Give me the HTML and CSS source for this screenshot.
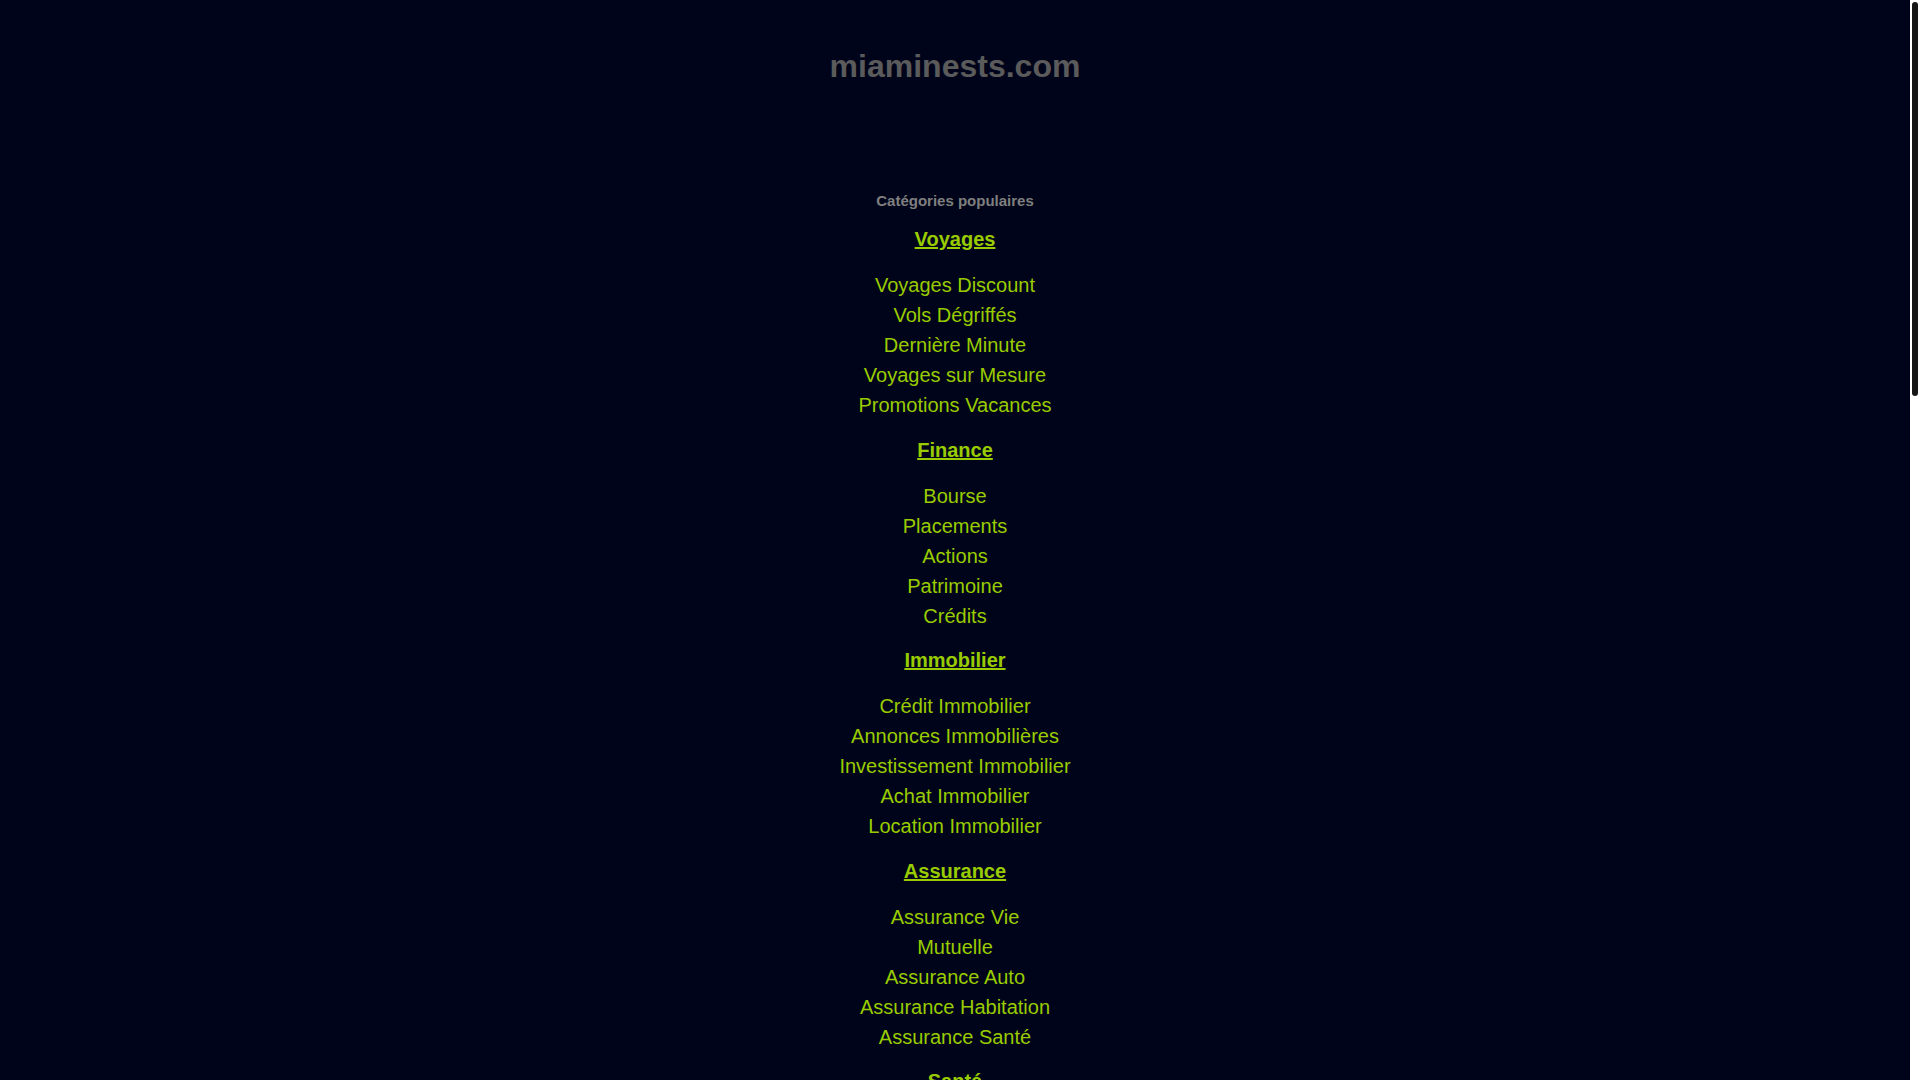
FILE: index.html
```html
<!DOCTYPE html>
<html lang="fr">
<head>
<meta charset="utf-8">
<title>miaminests.com</title>
<link rel="stylesheet" href="styles.css">
</head>
<body>
<div class="page">
  <h1 class="site-title">miaminests.com</h1>
  <div class="cats">
    <div class="cats-label">Catégories populaires</div>
    <section class="cat">
      <a class="cat-head" href="#">Voyages</a>
      <ul class="cat-list">
        <li><a href="#">Voyages Discount</a></li>
        <li><a href="#">Vols Dégriffés</a></li>
        <li><a href="#">Dernière Minute</a></li>
        <li><a href="#">Voyages sur Mesure</a></li>
        <li><a href="#">Promotions Vacances</a></li>
      </ul>
    </section>
    <section class="cat">
      <a class="cat-head" href="#">Finance</a>
      <ul class="cat-list">
        <li><a href="#">Bourse</a></li>
        <li><a href="#">Placements</a></li>
        <li><a href="#">Actions</a></li>
        <li><a href="#">Patrimoine</a></li>
        <li><a href="#">Crédits</a></li>
      </ul>
    </section>
    <section class="cat">
      <a class="cat-head" href="#">Immobilier</a>
      <ul class="cat-list">
        <li><a href="#">Crédit Immobilier</a></li>
        <li><a href="#">Annonces Immobilières</a></li>
        <li><a href="#">Investissement Immobilier</a></li>
        <li><a href="#">Achat Immobilier</a></li>
        <li><a href="#">Location Immobilier</a></li>
      </ul>
    </section>
    <section class="cat">
      <a class="cat-head" href="#">Assurance</a>
      <ul class="cat-list">
        <li><a href="#">Assurance Vie</a></li>
        <li><a href="#">Mutuelle</a></li>
        <li><a href="#">Assurance Auto</a></li>
        <li><a href="#">Assurance Habitation</a></li>
        <li><a href="#">Assurance Santé</a></li>
      </ul>
    </section>
    <section class="cat">
      <a class="cat-head" href="#">Santé</a>
      <ul class="cat-list">
        <li><a href="#">Médecine Douce</a></li>
        <li><a href="#">Nutrition</a></li>
        <li><a href="#">Bien-être</a></li>
        <li><a href="#">Remise en Forme</a></li>
        <li><a href="#">Régime</a></li>
      </ul>
    </section>
    <section class="cat">
      <a class="cat-head" href="#">Auto</a>
      <ul class="cat-list">
        <li><a href="#">Voitures Neuves</a></li>
        <li><a href="#">Voitures d'Occasion</a></li>
        <li><a href="#">Location Voiture</a></li>
        <li><a href="#">Pièces Auto</a></li>
        <li><a href="#">Crédit Auto</a></li>
      </ul>
    </section>
    <section class="cat">
      <a class="cat-head" href="#">Emploi</a>
      <ul class="cat-list">
        <li><a href="#">Offres d'Emploi</a></li>
        <li><a href="#">Intérim</a></li>
        <li><a href="#">CV en Ligne</a></li>
        <li><a href="#">Recrutement</a></li>
        <li><a href="#">Carrière</a></li>
      </ul>
    </section>
    <section class="cat">
      <a class="cat-head" href="#">Formation</a>
      <ul class="cat-list">
        <li><a href="#">Cours de Langues</a></li>
        <li><a href="#">Formation Continue</a></li>
        <li><a href="#">Écoles</a></li>
        <li><a href="#">Universités</a></li>
        <li><a href="#">Soutien Scolaire</a></li>
      </ul>
    </section>
    <section class="cat">
      <a class="cat-head" href="#">Maison</a>
      <ul class="cat-list">
        <li><a href="#">Décoration</a></li>
        <li><a href="#">Jardinage</a></li>
        <li><a href="#">Bricolage</a></li>
        <li><a href="#">Meubles</a></li>
        <li><a href="#">Électroménager</a></li>
      </ul>
    </section>
    <section class="cat">
      <a class="cat-head" href="#">Shopping</a>
      <ul class="cat-list">
        <li><a href="#">Mode</a></li>
        <li><a href="#">Bijoux</a></li>
        <li><a href="#">Cadeaux</a></li>
        <li><a href="#">Cosmétiques</a></li>
        <li><a href="#">Soldes</a></li>
      </ul>
    </section>
    <section class="cat">
      <a class="cat-head" href="#">Technologie</a>
      <ul class="cat-list">
        <li><a href="#">Ordinateurs</a></li>
        <li><a href="#">Téléphones Mobiles</a></li>
        <li><a href="#">Internet</a></li>
        <li><a href="#">Logiciels</a></li>
        <li><a href="#">Jeux Vidéo</a></li>
      </ul>
    </section>
    <section class="cat">
      <a class="cat-head" href="#">Loisirs</a>
      <ul class="cat-list">
        <li><a href="#">Sports</a></li>
        <li><a href="#">Musique</a></li>
        <li><a href="#">Cinéma</a></li>
        <li><a href="#">Livres</a></li>
        <li><a href="#">Sorties</a></li>
      </ul>
    </section>
  </div>
</div>
<div class="scrollbar" aria-hidden="true"><div class="scrollbar-thumb"></div></div>
</body>
</html>
```
FILE: styles.css
```css
html {
  background: #00041a;
}
body {
  margin: 0;
  background: #00041a;
  font-family: "Liberation Sans", Arial, sans-serif;
}
.page {
  padding: 46px 10px 200px 0;
  text-align: center;
}
.site-title {
  margin: 0;
  font-size: 32px;
  line-height: 40px;
  font-weight: bold;
  color: #5b5b5b;
}
.cats {
  margin-top: 105px;
  display: flex;
  flex-direction: column;
  align-items: center;
}
.cats-label {
  font-size: 15px;
  line-height: 20px;
  font-weight: bold;
  color: #7f7f7f;
  margin-bottom: 13px;
}
.cat {
  display: flex;
  flex-direction: column;
  align-items: center;
}
.cat-head {
  display: block;
  margin: 0 0 16px;
  font-size: 20px;
  line-height: 30px;
  font-weight: bold;
  color: #99cc00;
  text-decoration: underline;
}
.cat-list {
  list-style: none;
  margin: 0 0 14.5px;
  padding: 0;
}
.cat-list li {
  font-size: 20px;
  line-height: 30px;
}
.cat-list a {
  color: #99cc00;
  text-decoration: none;
}
.scrollbar {
  position: fixed;
  top: 0;
  right: 0;
  width: 10px;
  height: 100vh;
  background: #ffffff;
}
.scrollbar-thumb {
  position: absolute;
  top: 2px;
  left: 2px;
  width: 6px;
  height: 394px;
  border-radius: 3px;
  background: #161616;
}
```
